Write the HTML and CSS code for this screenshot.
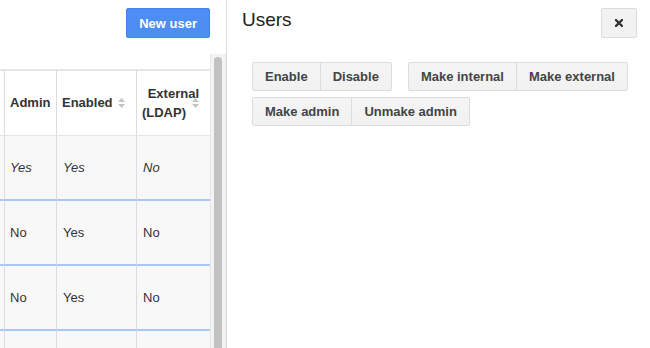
FILE: index.html
```html
<!DOCTYPE html>
<html>
<head>
<meta charset="utf-8">
<link rel="stylesheet" href="styles.css">
</head>
<body>
<div class="app">
  <div class="left">
    <div class="left-top">
      <button class="btn-primary">New user</button>
    </div>
    <div class="left-body">
      <div class="table-wrap">
        <table class="grid">
          <colgroup>
            <col class="c0"><col class="c1"><col class="c2"><col class="c3">
          </colgroup>
          <thead>
            <tr>
              <th class="cut"></th>
              <th>Admin</th>
              <th class="sortable">Enabled
                <svg class="sort" width="7" height="10" viewBox="0 0 7 10"><polygon points="0,4 3.5,0 7,4" /><polygon points="0,6 7,6 3.5,10" /></svg>
              </th>
              <th class="sortable right">External<br>(LDAP)<span class="spacer"></span>
                <svg class="sort" width="7" height="10" viewBox="0 0 7 10"><polygon points="0,4 3.5,0 7,4" /><polygon points="0,6 7,6 3.5,10" /></svg>
              </th>
            </tr>
          </thead>
          <tbody>
            <tr class="it"><td class="cut"></td><td>Yes</td><td>Yes</td><td>No</td></tr>
            <tr><td class="cut"></td><td>No</td><td>Yes</td><td>No</td></tr>
            <tr><td class="cut"></td><td>No</td><td>Yes</td><td>No</td></tr>
            <tr><td class="cut"></td><td></td><td></td><td></td></tr>
          </tbody>
        </table>
      </div>
      <div class="scrollbar"><div class="thumb"></div></div>
    </div>
  </div>
  <div class="right">
    <div class="right-head">
      <h1 class="title">Users</h1>
      <button class="btn-close" aria-label="Close">
        <svg width="8" height="8" viewBox="0 0 8 8"><path d="M1 1 L7 7 M7 1 L1 7" stroke="#333" stroke-width="2.3" stroke-linecap="square"/></svg>
      </button>
    </div>
    <div class="actions">
      <div class="group"><button class="btn">Enable</button><button class="btn">Disable</button></div>
      <div class="group"><button class="btn">Make internal</button><button class="btn">Make external</button></div>
      <div class="group"><button class="btn">Make admin</button><button class="btn">Unmake admin</button></div>
    </div>
  </div>
</div>
</body>
</html>
```
FILE: styles.css
```css
html, body {
  margin: 0;
  padding: 0;
  background: #fff;
}
body {
  font-family: "Liberation Sans", Arial, sans-serif;
  font-size: 13px;
  color: #333;
  height: 348px;
  overflow: hidden;
}
.app {
  display: flex;
  height: 348px;
}
.left {
  width: 226px;
  border-right: 1px solid #dcdcdc;
  display: flex;
  flex-direction: column;
  flex: none;
}
.left-top {
  height: 54px;
  box-sizing: border-box;
  padding: 8px 16px 0 0;
  display: flex;
  justify-content: flex-end;
  align-items: flex-start;
}
.btn-primary {
  height: 30px;
  padding: 0 12px;
  background: #4d8ef4;
  border: 1px solid #4385f0;
  border-radius: 2px;
  color: #fff;
  font-family: inherit;
  font-weight: bold;
  font-size: 13px;
}
.left-body {
  flex: 1;
  display: flex;
  overflow: hidden;
}
.table-wrap {
  width: 210px;
  padding-top: 15px;
  overflow: hidden;
  flex: none;
}
.grid {
  table-layout: fixed;
  border-collapse: separate;
  border-spacing: 0;
  width: 210px;
}
.c0 { width: 4px; }
.c1 { width: 52px; }
.c2 { width: 80px; }
.c3 { width: 74px; }
.grid th, .grid td {
  box-sizing: border-box;
  padding: 0 0 0 5px;
  border-left: 1px solid #dcdcdc;
  text-align: left;
  vertical-align: middle;
  white-space: nowrap;
}
.grid th.cut, .grid td.cut {
  border-left: none;
  padding: 0;
}
.grid th {
  height: 67px;
  background: #fff;
  border-top: 2px solid #e6e6e6;
  border-bottom: 1px solid #e6e6e6;
  font-weight: bold;
  color: #333;
  line-height: 19px;
  padding-bottom: 1px;
}
.grid th.sortable {
  position: relative;
}
.grid th.right {
  text-align: right;
  padding: 0 11px 1px 0;
}
.spacer {
  display: inline-block;
  width: 13px;
}
.sort {
  position: absolute;
  right: 11px;
  top: 50%;
  margin-top: -5px;
  fill: #c4c4c4;
}
.grid td {
  height: 65px;
  background: #f8f8f8;
  border-bottom: 2px solid #a9c6f7;
  padding-left: 5px;
  color: #333;
}
.grid tr.it td {
  font-style: italic;
}
.grid td + td {
  padding-left: 6px;
}
.grid td.cut + td {
  padding-left: 5px;
}
.scrollbar {
  width: 16px;
  box-sizing: border-box;
  background: #f4f4f4;
  border-left: 1px solid #e6e6e6;
  border-right: 1px solid #ececec;
  flex: none;
  padding: 3px 0 0 3px;
}
.thumb {
  width: 8px;
  height: 400px;
  background: #c1c1c1;
  border-radius: 4px;
}
.right {
  flex: 1;
  padding: 8px 13px 0 15px;
}
.right-head {
  display: flex;
  justify-content: space-between;
  align-items: flex-start;
}
.title {
  margin: 1px 0 0 0;
  font-size: 19px;
  line-height: 22px;
  font-weight: normal;
  color: #222;
}
.btn-close {
  width: 36px;
  height: 30px;
  padding: 0;
  background: #f2f2f2;
  border: 1px solid #dcdcdc;
  border-radius: 2px;
  display: flex;
  align-items: center;
  justify-content: center;
}
.actions {
  margin: 24px 0 0 10px;
  display: flex;
  flex-wrap: wrap;
  column-gap: 16px;
  row-gap: 6px;
}
.group {
  display: flex;
}
.btn {
  height: 29px;
  padding: 0 12px;
  background: linear-gradient(#f5f5f5, #f1f1f1);
  border: 1px solid #dcdcdc;
  border-radius: 0;
  color: #444;
  font-family: inherit;
  font-weight: bold;
  font-size: 13px;
}
.btn:first-child {
  border-radius: 2px 0 0 2px;
}
.btn:last-child {
  border-radius: 0 2px 2px 0;
}
.btn + .btn {
  margin-left: -1px;
}
```
